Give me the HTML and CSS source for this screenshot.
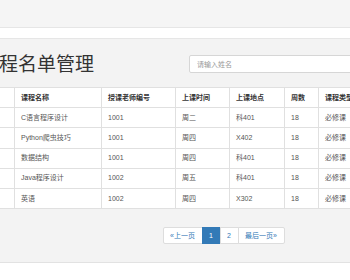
FILE: index.html
```html
<!DOCTYPE html>
<html lang="zh-CN">
<head>
<meta charset="utf-8">
<title>课程名单管理</title>
<link rel="stylesheet" href="styles.css">
</head>
<body>
<div class="navbar"></div>
<div class="gap"></div>
<section class="main">
  <div class="wrap">
    <div class="head">
      <h1 class="title">课程名单管理</h1>
      <input class="search" type="text" placeholder="请输入姓名">
    </div>
    <table class="grid">
      <thead>
        <tr>
          <th class="c1"></th>
          <th class="c2">课程名称</th>
          <th class="c3">授课老师编号</th>
          <th class="c4">上课时间</th>
          <th class="c5">上课地点</th>
          <th class="c6">周数</th>
          <th class="c7">课程类型</th>
        </tr>
      </thead>
      <tbody>
        <tr><td></td><td>C语言程序设计</td><td>1001</td><td>周二</td><td>科401</td><td>18</td><td>必修课</td></tr>
        <tr><td></td><td>Python爬虫技巧</td><td>1001</td><td>周四</td><td>X402</td><td>18</td><td>必修课</td></tr>
        <tr><td></td><td>数据结构</td><td>1001</td><td>周四</td><td>科401</td><td>18</td><td>必修课</td></tr>
        <tr><td></td><td>Java程序设计</td><td>1002</td><td>周五</td><td>科401</td><td>18</td><td>必修课</td></tr>
        <tr><td></td><td>英语</td><td>1002</td><td>周四</td><td>X302</td><td>18</td><td>必修课</td></tr>
      </tbody>
    </table>
    <nav class="pager">
      <a class="pg first">«上一页</a>
      <a class="pg active">1</a>
      <a class="pg">2</a>
      <a class="pg last">最后一页»</a>
    </nav>
  </div>
</section>
</body>
</html>
```
FILE: styles.css
```css
html, body {
  margin: 0;
  padding: 0;
  overflow: hidden;
  background: #fff;
  font-family: "Liberation Sans", "Noto Sans CJK SC", sans-serif;
  color: #333;
}
.navbar {
  height: 27px;
  background: #f5f5f5;
  border-bottom: 1px solid #e6e6e6;
}
.gap {
  height: 10px;
}
.main {
  background: #f3f3f3;
  border-top: 1px solid #e6e6e6;
  border-bottom: 1px solid #e2e2e2;
  padding: 16px 0 18px;
  overflow: hidden;
}
.wrap {
  margin-left: -20px;
  width: 487px;
}
.head {
  display: flex;
  align-items: center;
  height: 18px;
}
.title {
  margin: 0;
  font-size: 19px;
  line-height: 19px;
  font-weight: normal;
  color: #333;
  flex: none;
  width: 209px;
}
.search {
  box-sizing: border-box;
  width: 200px;
  height: 18px;
  border: 1px solid #d6d6d6;
  border-radius: 2px;
  background: #fff;
  padding: 0 7px;
  font-family: inherit;
  font-size: 7px;
  outline: none;
}
.search::placeholder {
  color: #999;
}
.grid {
  margin-top: 14px;
  width: 100%;
  border-collapse: collapse;
  background: #fff;
  font-size: 7px;
  line-height: 8px;
  table-layout: fixed;
}
.grid th, .grid td {
  border: 1px solid #e0e0e0;
  padding: 5.6px 6px;
  text-align: left;
  white-space: nowrap;
}
.grid th {
  font-weight: bold;
  color: #333;
}
.grid td {
  color: #555;
}
.c1 { width: 21px; }
.c2 { width: 74px; }
.c3 { width: 61px; }
.c4 { width: 41px; }
.c5 { width: 42px; }
.c6 { width: 21px; }
.c7 { width: auto; }
.pager {
  display: flex;
  justify-content: center;
  margin-top: 18px;
}
.pg {
  box-sizing: border-box;
  height: 17px;
  line-height: 15px;
  font-size: 7px;
  color: #337ab7;
  background: #fff;
  border: 1px solid #ddd;
  margin-left: -1px;
  text-align: center;
}
.first { width: 40px; border-radius: 2px 0 0 2px; margin-left: 0; }
.active { width: 19px; background: #337ab7; border-color: #337ab7; color: #fff; }
.pg:nth-child(3) { width: 19px; }
.last { width: 47px; border-radius: 0 2px 2px 0; }
```
